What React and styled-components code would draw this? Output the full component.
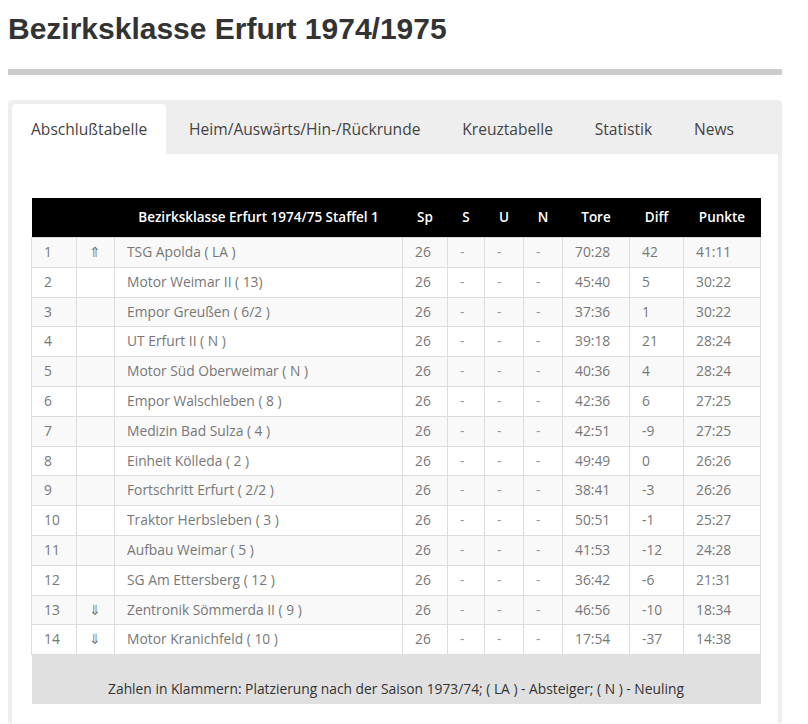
import React, { useState } from "react";
import styled, { createGlobalStyle } from "styled-components";

const GlobalStyle = createGlobalStyle`
  body {
    margin: 0;
    background: #fff;
    font-family: "Open Sans", "Liberation Sans", sans-serif;
  }
`;

const Page = styled.div`
  width: 774px;
  margin-left: 8px;
`;

const Title = styled.h1`
  margin: 12px 0 24px;
  font-family: "Liberation Sans", Arial, sans-serif;
  font-size: 30px;
  line-height: 33px;
  font-weight: bold;
  color: #333;
`;

const Rule = styled.div`
  height: 6px;
  background: #ccc;
  margin-bottom: 25px;
`;

const Panel = styled.div`
  background: #eee;
  border-radius: 4px;
  padding: 4px 4px 0;
`;

const TabBar = styled.ul`
  display: flex;
  list-style: none;
  margin: 0;
  padding: 0;
`;

const Tab = styled.li`
  height: 50px;
  padding: 0 19px;
  margin-right: 3.8px;
  display: flex;
  align-items: center;
  font-size: 15.6px;
  color: #444;
  cursor: pointer;
  border-radius: 4px 4px 0 0;
  background: ${(p) => (p.$active ? "#fff" : "transparent")};
`;

const Content = styled.div`
  background: #fff;
  padding: 44px 18px 20px 19px;
`;

const Table = styled.table`
  width: 729px;
  table-layout: fixed;
  border-collapse: collapse;
  font-size: 13.8px;
`;

const HeadCell = styled.th`
  background: #000;
  color: #fff;
  font-weight: 600;
  font-size: 13.5px;
  text-align: center;
  padding: 10px 0;
  line-height: 19px;
  white-space: nowrap;
  width: ${(p) => p.$w}px;
`;

const Row = styled.tr`
  background: ${(p) => (p.$odd ? "#f9f9f9" : "#fff")};
`;

const Cell = styled.td`
  padding: 5px 12px;
  height: 18.8px;
  line-height: 18.8px;
  border: 1px solid #ddd;
  color: ${(p) => (p.$light ? "#999" : "#777")};
  text-align: left;
  white-space: nowrap;
  overflow: hidden;
`;

const Arrow = styled.span`
  line-height: 0;
  color: #777;
`;

const Foot = styled.td`
  background: #e0e0e0;
  color: #333;
  text-align: center;
  padding: 24px 0 6px;
  line-height: 19px;
`;

const tabs = [
  "Abschlußtabelle",
  "Heim/Auswärts/Hin-/Rückrunde",
  "Kreuztabelle",
  "Statistik",
  "News",
];

const columns = [
  { label: "", w: 45 },
  { label: "", w: 38 },
  { label: "Bezirksklasse Erfurt 1974/75 Staffel 1", w: 288 },
  { label: "Sp", w: 45 },
  { label: "S", w: 37 },
  { label: "U", w: 39 },
  { label: "N", w: 39 },
  { label: "Tore", w: 67 },
  { label: "Diff", w: 54 },
  { label: "Punkte", w: 77 },
];

const rows = [
  ["1", "⇑", "TSG Apolda ( LA )", "70:28", "42", "41:11"],
  ["2", "", "Motor Weimar II ( 13)", "45:40", "5", "30:22"],
  ["3", "", "Empor Greußen ( 6/2 )", "37:36", "1", "30:22"],
  ["4", "", "UT Erfurt II ( N )", "39:18", "21", "28:24"],
  ["5", "", "Motor Süd Oberweimar ( N )", "40:36", "4", "28:24"],
  ["6", "", "Empor Walschleben ( 8 )", "42:36", "6", "27:25"],
  ["7", "", "Medizin Bad Sulza ( 4 )", "42:51", "-9", "27:25"],
  ["8", "", "Einheit Kölleda ( 2 )", "49:49", "0", "26:26"],
  ["9", "", "Fortschritt Erfurt ( 2/2 )", "38:41", "-3", "26:26"],
  ["10", "", "Traktor Herbsleben ( 3 )", "50:51", "-1", "25:27"],
  ["11", "", "Aufbau Weimar ( 5 )", "41:53", "-12", "24:28"],
  ["12", "", "SG Am Ettersberg ( 12 )", "36:42", "-6", "21:31"],
  ["13", "⇓", "Zentronik Sömmerda II ( 9 )", "46:56", "-10", "18:34"],
  ["14", "⇓", "Motor Kranichfeld ( 10 )", "17:54", "-37", "14:38"],
];

export default function App() {
  const [active, setActive] = useState(0);

  return (
    <>
      <GlobalStyle />
      <Page>
        <Title>Bezirksklasse Erfurt 1974/1975</Title>
        <Rule />
        <Panel>
          <TabBar>
            {tabs.map((t, i) => (
              <Tab key={t} $active={i === active} onClick={() => setActive(i)}>
                {t}
              </Tab>
            ))}
          </TabBar>
          <Content>
            <Table>
              <thead>
                <tr>
                  {columns.map((c, i) => (
                    <HeadCell key={i} $w={c.w}>
                      {c.label}
                    </HeadCell>
                  ))}
                </tr>
              </thead>
              <tbody>
                {rows.map(([pos, arrow, team, tore, diff, pts], i) => (
                  <Row key={pos} $odd={i % 2 === 0}>
                    <Cell>{pos}</Cell>
                    <Cell>{arrow && <Arrow>{arrow}</Arrow>}</Cell>
                    <Cell>{team}</Cell>
                    <Cell>26</Cell>
                    <Cell $light>-</Cell>
                    <Cell $light>-</Cell>
                    <Cell $light>-</Cell>
                    <Cell>{tore}</Cell>
                    <Cell>{diff}</Cell>
                    <Cell>{pts}</Cell>
                  </Row>
                ))}
              </tbody>
              <tfoot>
                <tr>
                  <Foot colSpan={10}>
                    Zahlen in Klammern: Platzierung nach der Saison 1973/74; ( LA ) - Absteiger; ( N ) - Neuling
                  </Foot>
                </tr>
              </tfoot>
            </Table>
          </Content>
        </Panel>
      </Page>
    </>
  );
}
